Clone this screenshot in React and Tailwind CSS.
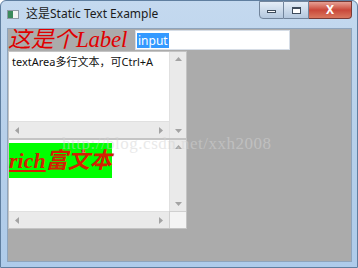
import React from "react";

const sans = { fontFamily: '"Noto Sans", "Noto Sans CJK SC", sans-serif' };

const Arrow = ({ dir }) => {
  const pts = {
    up: "0,4 3.5,0 7,4",
    down: "0,0 3.5,4 7,0",
    left: "4,0 0,3.5 4,7",
    right: "0,0 4,3.5 0,7",
  }[dir];
  const vb = dir === "up" || dir === "down" ? "0 0 7 4" : "0 0 4 7";
  const cls = dir === "up" || dir === "down" ? "w-[7px] h-[4px]" : "w-[4px] h-[7px]";
  return (
    <svg viewBox={vb} className={cls}>
      <polygon points={pts} fill="#a3a3a3" />
    </svg>
  );
};

const VScroll = () => (
  <div className="w-[17px] h-full bg-[#eaeaea] border-l border-[#e0e0e0] flex flex-col justify-between items-center py-[5px]">
    <Arrow dir="up" />
    <Arrow dir="down" />
  </div>
);

const HScroll = () => (
  <div className="h-[17px] w-full bg-[#eaeaea] border-t border-[#e0e0e0] flex justify-between items-center px-[6px]">
    <Arrow dir="left" />
    <Arrow dir="right" />
  </div>
);

export default function App() {
  return (
    <div
      className="w-[358px] h-[268px] flex flex-col bg-gradient-to-b from-[#c4d9ef] via-[#b7d0ea] to-[#aecbea] border border-[#5f7e9f] rounded-t-[6px] overflow-hidden"
      style={sans}
    >
      {/* title bar */}
      <div className="h-[27px] flex items-start relative">
        <div className="flex items-center gap-[7px] pl-[6px] pt-[7px]">
          <div className="w-[12px] h-[9px] bg-[#f4f4f4] border border-[#8e9aa6] flex">
            <div className="w-[5px] h-full bg-[#3c8a5c]" />
          </div>
          <span className="text-[12px] text-[#1b1b1b] leading-none">这是Static Text Example</span>
        </div>
        <div className="ml-auto mr-[5px] flex h-[18px]">
          <div className="w-[25px] h-full bg-gradient-to-b from-[#e4edf7] to-[#b4c8de] border border-[#72859c] rounded-bl-[4px] flex items-center justify-center">
            <div className="w-[9px] h-[3px] border border-[#3e4c5c] bg-white mt-[3px]" />
          </div>
          <div className="w-[25px] h-full bg-gradient-to-b from-[#e4edf7] to-[#b4c8de] border-y border-r border-[#72859c] flex items-center justify-center">
            <div className="w-[9px] h-[7px] border border-[#3e4c5c] border-t-2 bg-white" />
          </div>
          <div className="w-[43px] h-full bg-gradient-to-b from-[#e5a095] via-[#c9473a] to-[#d9775f] border-y border-r border-[#7a3a36] rounded-br-[4px] flex items-center justify-center">
            <span className="text-white text-[12px] font-bold leading-none">X</span>
          </div>
        </div>
      </div>

      {/* client area */}
      <div className="flex-1 ml-[6px] mr-[5px] mb-[5px] bg-[#ababab] border border-[#8ea4bc] relative overflow-hidden">
        <div className="flex items-start h-[22px]">
          <div
            className="w-[127px] h-[22px] text-[#e00000] italic text-[23px] leading-[22px] whitespace-nowrap tracking-[-0.3px]"
            style={{ fontFamily: '"Liberation Serif", "Noto Sans CJK SC", serif' }}
          >
            这是个Label
          </div>
          <div className="w-[155px] h-[20px] mt-[1px] bg-white border border-[#d6dde6] flex items-center pl-[1px]">
            <span className="bg-[#3399ff] text-white text-[12px] leading-[15px] px-[1px]">input</span>
          </div>
        </div>

        {/* text area */}
        <div className="w-[179px] h-[88px] bg-white border border-[#c4c4c4] flex">
          <div className="flex-1 flex flex-col">
            <div className="flex-1 text-[11px] text-[#111] pl-[3px] pt-[2px] leading-[15px]">textArea多行文本，可Ctrl+A</div>
            <HScroll />
          </div>
          <VScroll />
        </div>

        {/* rich text */}
        <div className="w-[179px] h-[90px] bg-white border border-[#c4c4c4] flex flex-col">
          <div className="flex-1 flex">
            <div className="flex-1 pt-[3px]">
              <span
                className="bg-[#00ff00] text-[#d42000] italic font-bold text-[22px] leading-[35px] inline-block"
                style={{ fontFamily: '"Liberation Serif", "Noto Sans CJK SC", serif' }}
              >
                <span className="underline">rich</span>富文本
              </span>
            </div>
            <VScroll />
          </div>
          <div className="flex h-[17px]">
            <div className="flex-1">
              <HScroll />
            </div>
            <div className="w-[17px] h-[17px] bg-[#f4f4f4] border-l border-t border-[#d0d0d0]" />
          </div>
        </div>

        {/* watermark */}
        <div
          className="absolute left-[54px] top-[102px] text-[17px] text-[#d4d4d4] opacity-50 whitespace-nowrap pointer-events-none tracking-[0.5px]"
          style={{ fontFamily: '"Liberation Serif", serif' }}
        >
          http://blog.csdn.net/xxh2008
        </div>
      </div>
    </div>
  );
}
